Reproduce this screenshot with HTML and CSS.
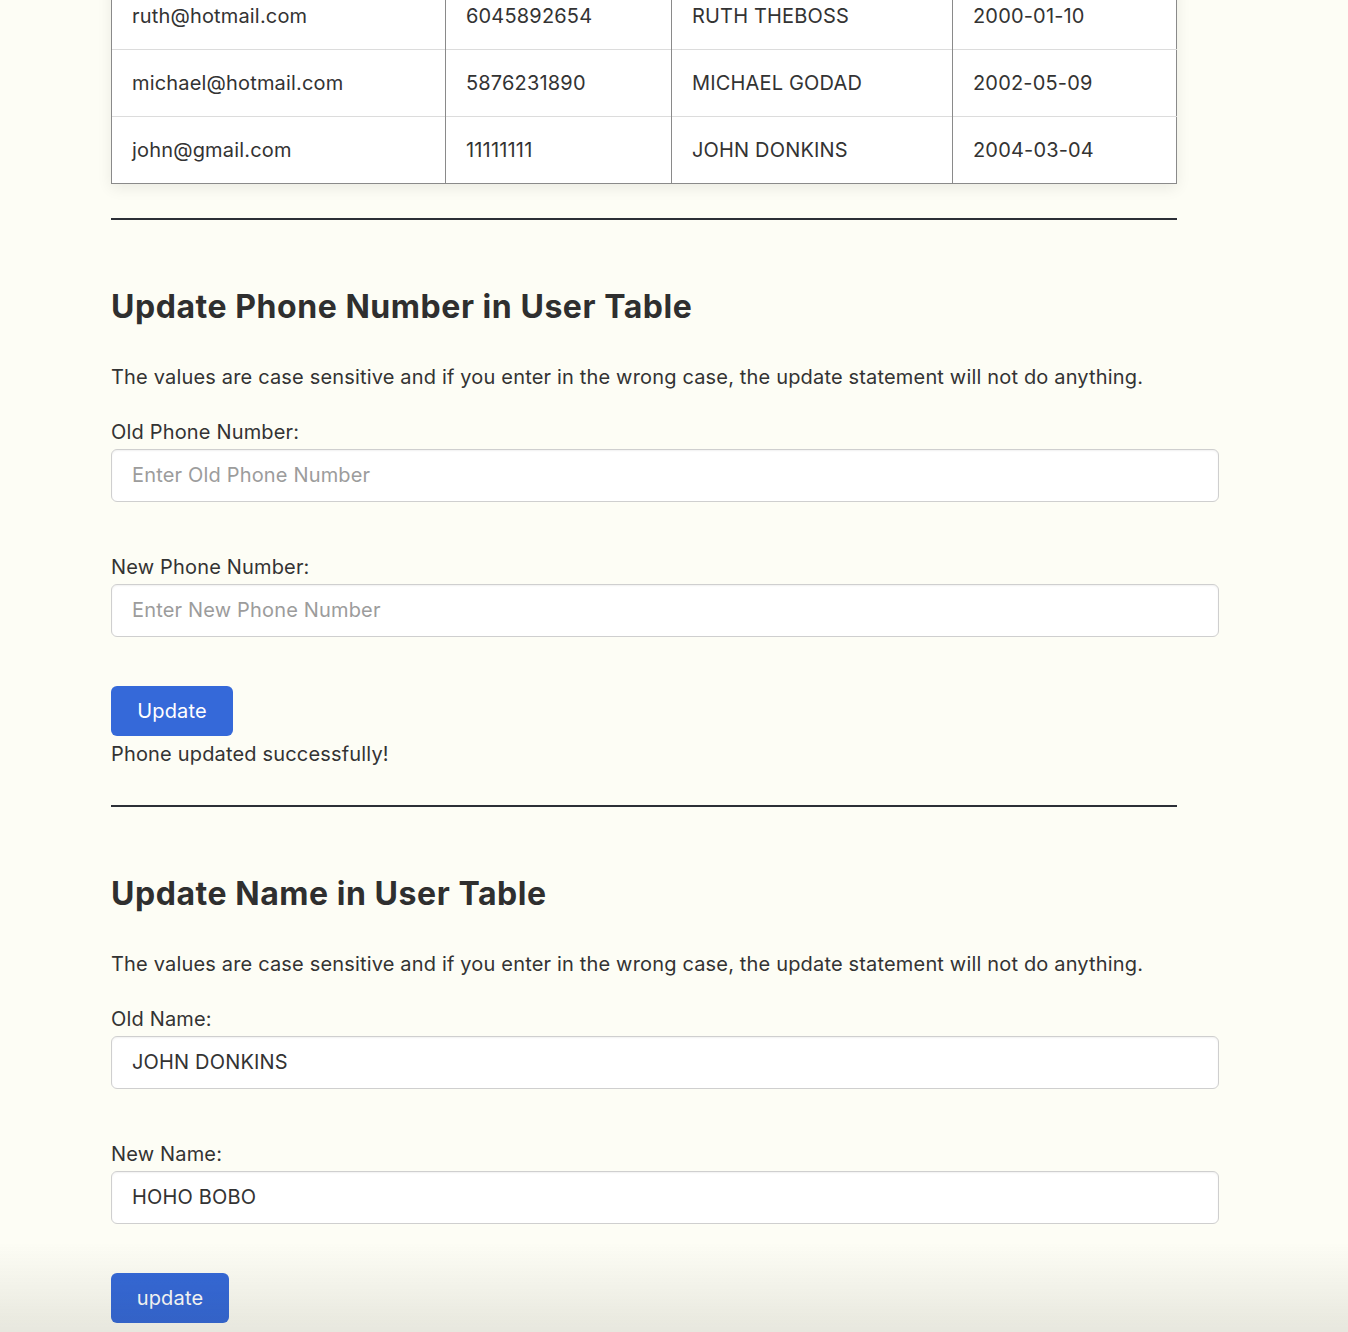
FILE: index.html
```html
<!DOCTYPE html>
<html>
<head>
<meta charset="utf-8">
<link rel="stylesheet" href="styles.css">
</head>
<body>
<div class="page">
  <table class="users">
    <tr><td class="c1">ruth@hotmail.com</td><td class="c2">6045892654</td><td class="c3">RUTH THEBOSS</td><td class="c4">2000-01-10</td></tr>
    <tr><td>michael@hotmail.com</td><td>5876231890</td><td>MICHAEL GODAD</td><td>2002-05-09</td></tr>
    <tr><td>john@gmail.com</td><td>11111111</td><td>JOHN DONKINS</td><td>2004-03-04</td></tr>
  </table>
  <hr class="rule">

  <section class="form-section">
    <h2 class="title">Update Phone Number in User Table</h2>
    <p class="note">The values are case sensitive and if you enter in the wrong case, the update statement will not do anything.</p>
    <label class="lbl">Old Phone Number:</label>
    <input class="field" type="text" placeholder="Enter Old Phone Number">
    <label class="lbl lbl-gap">New Phone Number:</label>
    <input class="field" type="text" placeholder="Enter New Phone Number">
    <button class="btn btn-wide">Update</button>
    <div class="msg">Phone updated successfully!</div>
  </section>
  <hr class="rule rule2">

  <section class="form-section">
    <h2 class="title">Update Name in User Table</h2>
    <p class="note">The values are case sensitive and if you enter in the wrong case, the update statement will not do anything.</p>
    <label class="lbl">Old Name:</label>
    <input class="field" type="text" value="JOHN DONKINS">
    <label class="lbl lbl-gap">New Name:</label>
    <input class="field" type="text" value="HOHO BOBO">
    <button class="btn btn-narrow">update</button>
  </section>
</div>
<div class="shade"></div>
</body>
</html>
```
FILE: styles.css
```css
html, body {
  margin: 0;
  padding: 0;
  background: #fdfdf5;
}
body {
  font-family: Inter, "Liberation Sans", Arial, sans-serif;
  color: #333;
  font-size: 20px;
  letter-spacing: 0.17px;
  overflow: hidden;
}
.page {
  width: 1066px;
  margin-left: 111px;
}
.users {
  width: 1066px;
  margin-top: -18px;
  border-collapse: collapse;
  background: #fff;
  border: 1px solid #8a8a8a;
  box-shadow: 0 4px 14px rgba(0,0,0,0.08);
}
.users td {
  height: 67px;
  padding: 0 20px;
  font-size: 20px;
  color: #333;
  border-left: 1px solid #8a8a8a;
  border-top: 1px solid #dcdcdc;
  box-sizing: border-box;
  vertical-align: middle;
}
.users td.c1 { width: 334px; }
.users td.c2 { width: 226px; }
.users td.c3 { width: 281px; }
.rule {
  border: none;
  height: 2px;
  background: #2c2f36;
  margin: 34px 0 0 0;
}
.rule2 { margin-top: 39px; }
.form-section {
  display: flex;
  flex-direction: column;
  align-items: flex-start;
}
.title {
  font-size: 32px;
  font-weight: bold;
  letter-spacing: 0.55px;
  margin: 68px 0 0 0;
  line-height: 37px;
  color: #2f2f2f;
}
.note {
  margin: 40px 0 0 0;
  line-height: 24px;
}
.lbl {
  margin-top: 31px;
  line-height: 24px;
}
.lbl-gap { margin-top: 53px; }
.field {
  width: 100%;
  margin-top: 5px;
  padding: 14px 20px;
  font-family: Inter, "Liberation Sans", Arial, sans-serif;
  font-size: 20px;
  letter-spacing: 0.17px;
  line-height: 23px;
  color: #333;
  background: #fff;
  border: 1px solid #cfcfcf;
  border-radius: 6px;
  box-shadow: inset 0 1px 2px rgba(0,0,0,0.06);
  outline: none;
}
.field::placeholder { color: #9c9c9c; }
.btn {
  margin-top: 49px;
  height: 50px;
  background: #3569d9;
  color: #fff;
  border: none;
  border-radius: 6px;
  font-family: Inter, "Liberation Sans", Arial, sans-serif;
  font-size: 20px;
  letter-spacing: 0.17px;
  padding: 0;
}
.btn-wide { width: 122px; }
.btn-narrow { width: 118px; }
.msg {
  margin-top: 6px;
  line-height: 24px;
}
.shade {
  position: fixed;
  left: 0;
  right: 0;
  bottom: 0;
  height: 90px;
  background: linear-gradient(to bottom, rgba(0,0,0,0), rgba(40,40,20,0.1));
  pointer-events: none;
}
```
